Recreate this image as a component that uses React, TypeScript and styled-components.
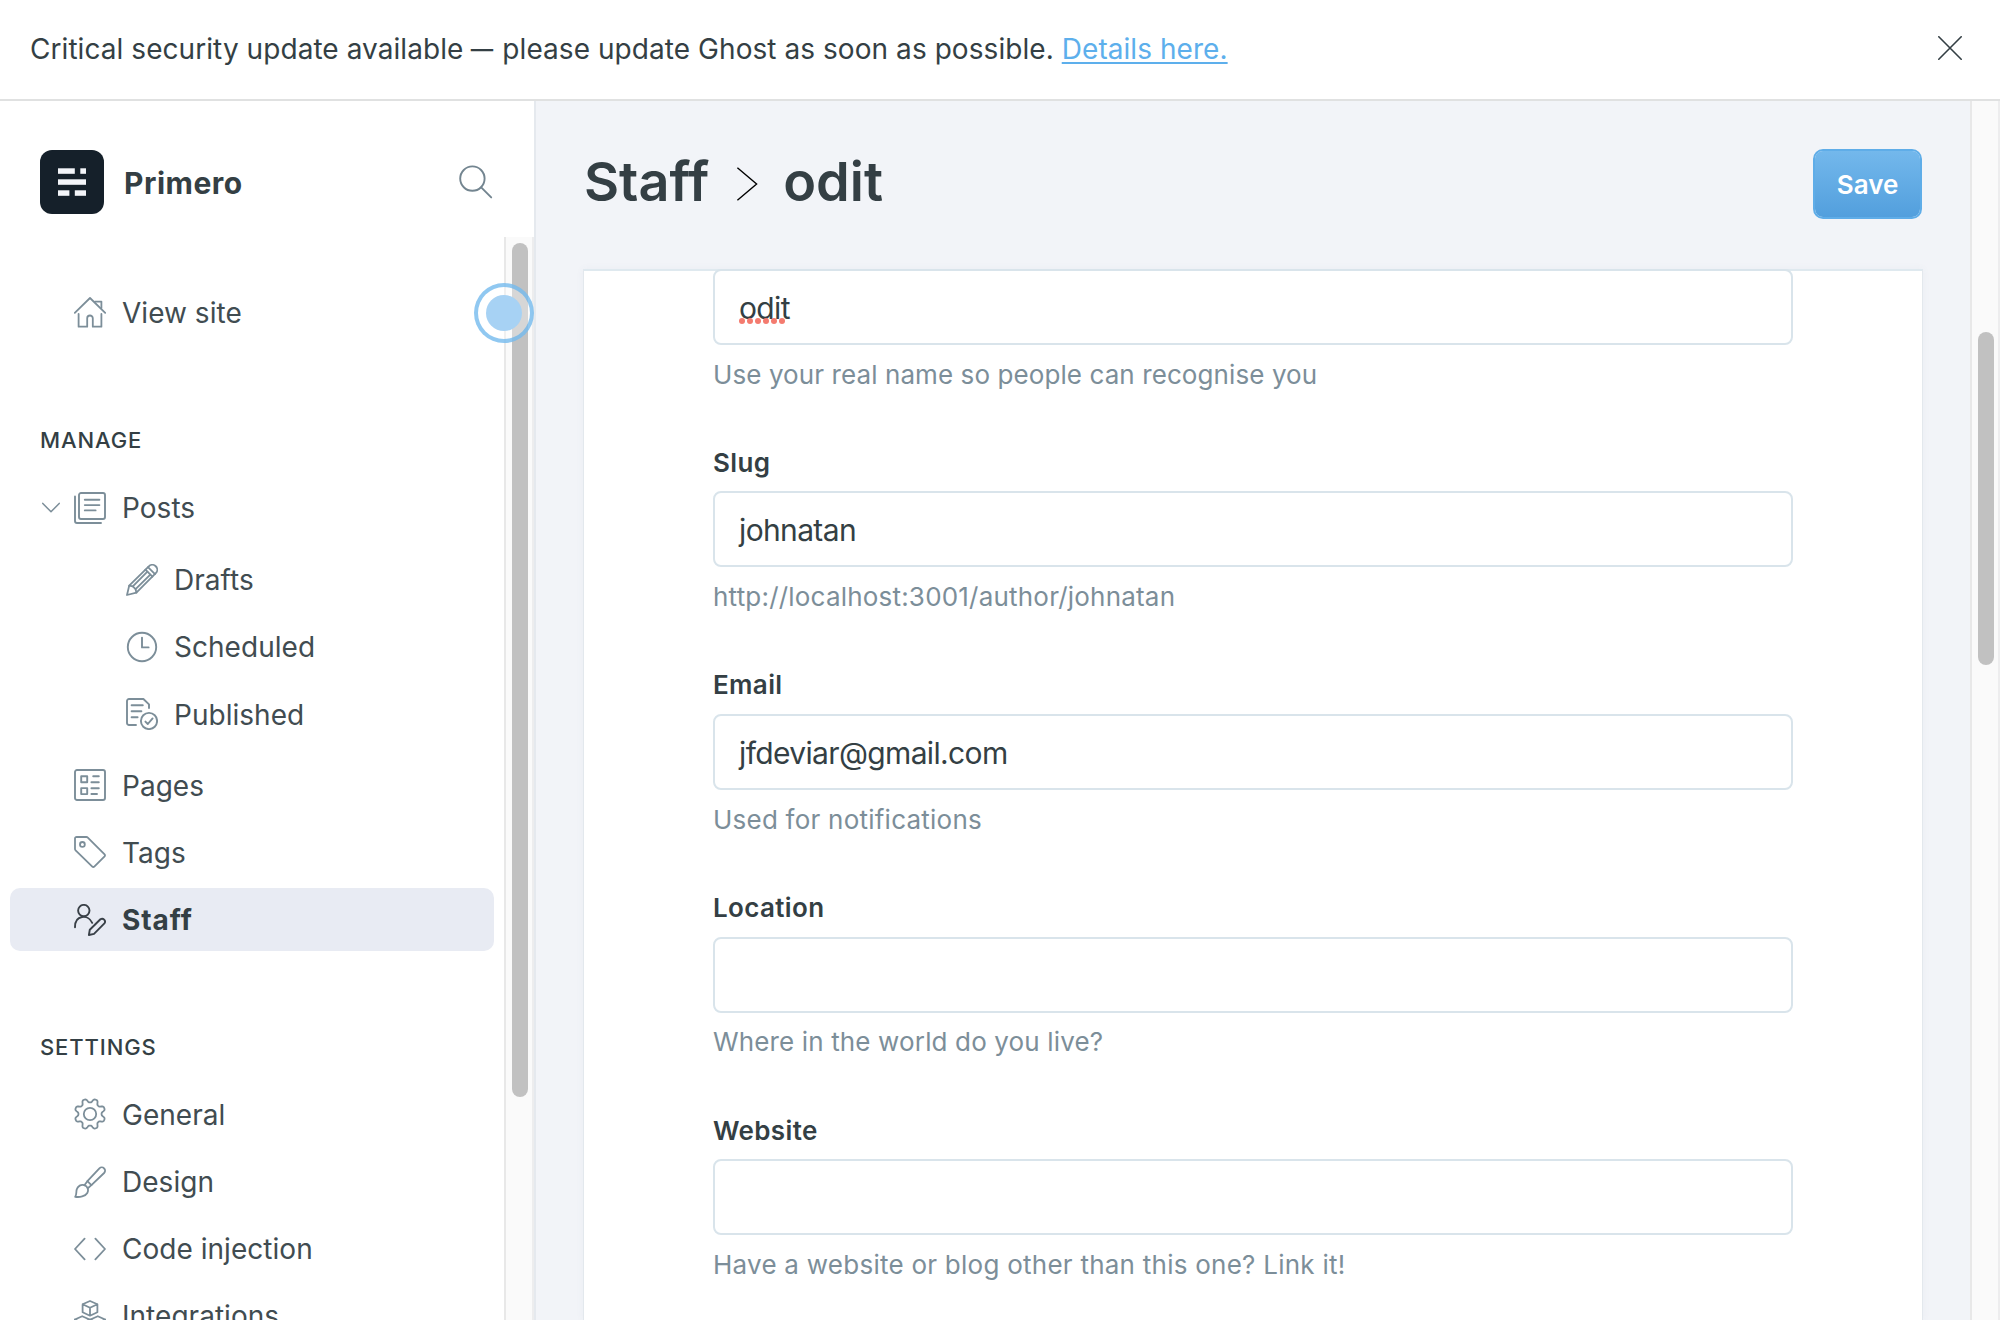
import React from 'react';
import styled, { createGlobalStyle } from 'styled-components';

const GlobalStyle = createGlobalStyle`
  *, *::before, *::after { box-sizing: border-box; }
  html, body { margin: 0; padding: 0; }
  body {
    font-family: Inter, 'Liberation Sans', sans-serif;
    color: #343f44;
    background: #fff;
    overflow: hidden;
  }
`;

const Page = styled.div`
  display: flex;
  flex-direction: column;
  width: 2000px;
  height: 1320px;
  overflow: hidden;
`;

/* ---------- Banner ---------- */

const Banner = styled.header`
  display: flex;
  align-items: center;
  justify-content: space-between;
  flex: none;
  height: 101px;
  padding: 0 38px 0 30px;
  border-bottom: 2px solid #e0e1e1;
`;

const BannerText = styled.p`
  margin: 0;
  padding-bottom: 1px;
  font-size: 28px;
  line-height: 36px;
  letter-spacing: 0.06px;
  white-space: nowrap;
`;

const Dash = styled.span`
  display: inline-block;
  margin: 0 -2px 0 -3px;
  transform: scaleX(0.8);
`;

const BannerLink = styled.a`
  color: #5dafec;
  text-decoration: underline;
  text-decoration-thickness: 2px;
  text-underline-offset: 3px;
`;

const CloseButton = styled.button`
  display: flex;
  padding: 0;
  margin-top: -3px;
  border: 0;
  background: none;
`;

const Body = styled.div`
  display: flex;
  flex: 1;
  min-height: 0;
`;

/* ---------- Sidebar ---------- */

const Sidebar = styled.aside`
  position: relative;
  display: flex;
  flex-direction: column;
  flex: none;
  width: 536px;
  border-right: 2px solid #e5e9ee;
`;

const SiteHeader = styled.div`
  display: flex;
  align-items: center;
  flex: none;
  height: 136px;
  padding: 56px 41px 30px 40px;
`;

const SiteName = styled.span`
  flex: 1;
  margin: 2px 0 0 20px;
  font-size: 30px;
  font-weight: 700;
  letter-spacing: 0.5px;
`;

const SearchButton = styled.button`
  display: flex;
  padding: 0;
  border: 0;
  background: none;
  color: #738590;
`;

const NavArea = styled.div`
  display: flex;
  flex: 1;
  min-height: 0;
`;

const NavList = styled.nav`
  flex: 1;
  min-width: 0;
  padding: 44.4px 10px 0;
  overflow: hidden;
`;

const NavHeading = styled.h2`
  margin: 0;
  padding: 77.8px 0 21.8px 30px;
  font-size: 22px;
  line-height: 28px;
  font-weight: 500;
  letter-spacing: 0.9px;
  text-transform: uppercase;
`;

const NavItem = styled.a<{ $active?: boolean; $sub?: boolean }>`
  display: flex;
  align-items: center;
  height: 63.2px;
  margin-bottom: 4px;
  padding-left: ${(p) => (p.$sub ? 116 : 30)}px;
  border-radius: 10px;
  background: ${(p) => (p.$active ? '#e8ebf3' : 'transparent')};
  color: ${(p) => (p.$active ? '#343f44' : '#414c51')};
  font-size: 28px;
  font-weight: ${(p) => (p.$active ? 700 : 400)};
  letter-spacing: ${(p) => (p.$active ? 0.95 : 0.03)}px;
  white-space: nowrap;

  svg { color: ${(p) => (p.$active ? '#394047' : '#7c8e99')}; }
`;

const NavLabel = styled.span`
  padding: 1px 0 0 16px;
`;

const CaretSlot = styled.span`
  display: flex;
  align-items: center;
  width: 34px;
`;

const SubNav = styled.div`
  padding: 4.7px 0 4px;
`;

const Track = styled.div<{ $top: number }>`
  flex: none;
  width: 30px;
  padding: ${(p) => p.$top}px 4px 0 6px;
  border-left: 2px solid #e8e8e8;
  border-right: 2px solid #ededee;
  background: #fafafa;
`;

const Thumb = styled.div<{ $length: number }>`
  width: 16px;
  height: ${(p) => p.$length}px;
  border-radius: 8px;
  background: #c1c1c1;
`;

const ClickMarker = styled.div`
  position: absolute;
  left: 474px;
  top: 182px;
  display: flex;
  align-items: center;
  justify-content: center;
  width: 60px;
  height: 60px;
  border: 4px solid rgba(97, 176, 235, 0.7);
  border-radius: 50%;
  background: rgba(255, 255, 255, 0.35);

  &::after {
    content: '';
    width: 36px;
    height: 36px;
    border-radius: 50%;
    background: #a7d2f4;
  }
`;

/* ---------- Main ---------- */

const Main = styled.main`
  display: flex;
  flex-direction: column;
  flex: 1;
  min-width: 0;
  padding: 0 47px;
  background: #f2f4f8;
  overflow: hidden;
`;

const Toolbar = styled.div`
  display: flex;
  align-items: flex-start;
  justify-content: space-between;
  flex: none;
  height: 168px;
  padding: 48px 1px 0;
`;

const Title = styled.h1`
  display: flex;
  align-items: center;
  margin: 0;
  font-size: 54px;
  line-height: 66px;
  font-weight: 600;
  letter-spacing: 0;

  svg { margin: 4px 25px 0 27px; }
`;

const SaveButton = styled.button`
  width: 109px;
  height: 70px;
  padding: 0;
  border: 2px solid #5fade8;
  border-radius: 10px;
  background: linear-gradient(#73b8ec, #529fdd) padding-box;
  color: #fff;
  font-family: inherit;
  font-size: 26px;
  font-weight: 600;
`;

const Card = styled.section`
  flex: 1;
  padding: 0 129px;
  border: 1px solid #e3e8ed;
  border-top: 2px solid #dfe9ef;
  border-bottom: 0;
  background: #fff;
  box-shadow: 0 0 8px rgba(70, 100, 130, 0.05);
`;

const Form = styled.form`
  margin-top: -2.3px;
`;

const FieldGroup = styled.div`
  display: flex;
  flex-direction: column;
  justify-content: flex-end;
  height: 222.67px;

  &:first-child { height: 123.8px; }
`;

const FieldLabel = styled.label`
  margin-bottom: 11.7px;
  font-size: 26px;
  line-height: 34px;
  font-weight: 600;
  letter-spacing: 0.35px;
`;

const FieldInput = styled.div`
  display: flex;
  align-items: center;
  flex: none;
  height: 76px;
  padding: 2px 24px 0;
  border: 2px solid #d9e4eb;
  border-radius: 8px;
  background: #fff;
  font-size: 30px;
  letter-spacing: -0.64px;
`;

const Misspelled = styled.span`
  position: relative;

  svg { position: absolute; left: 0; bottom: 1.5px; }
`;

const Hint = styled.p<{ $tracking: number }>`
  margin: 11.8px 0 0;
  font-size: 26px;
  line-height: 36px;
  letter-spacing: ${(p) => p.$tracking}px;
  color: #7c8e99;
  white-space: nowrap;
`;

/* ---------- Icons ---------- */

const IconSvg = styled.svg`
  display: block;
  flex: none;
  fill: none;
  stroke: currentColor;
  stroke-linejoin: round;
  stroke-linecap: round;
`;

const Svg = ({ w = 32, h = 32, sw = 1.9, children }: { w?: number; h?: number; sw?: number; children: React.ReactNode }) => (
  <IconSvg width={w} height={h} viewBox={`0 0 ${w} ${h}`} strokeWidth={sw}>
    {children}
  </IconSvg>
);

const HomeIcon = () => (
  <Svg sw={1.8}>
    <path d="M.8 15.8 L16 1 L31.2 15.8" />
    <path d="M4.6 17 V29.7 H13.2 V21.2 C13.2 17.6 18.8 17.6 18.8 21.2 V29.7 H27.4 V17" />
    <path d="M21 4.6 H27.4 V11" />
  </Svg>
);
const PostsIcon = () => (
  <Svg>
    <path d="M1 4.5 V29 a2 2 0 0 0 2 2 H27" />
    <rect x="5" y="1" width="26" height="26" rx="2" />
    <path d="M10.8 7.7 H25.4 M10.8 13.1 H25.4 M10.8 18.4 H21.6" />
  </Svg>
);
const DraftsIcon = () => (
  <Svg sw={1.8}>
    <path d="M1 31 L3.2 21.6 L22.8 2.3 A4.9 4.9 0 0 1 29.8 9.2 L10.4 28.7 Z" />
    <path d="M19.4 5.7 L26.4 12.7 M22 3.1 L29 10.1" />
    <path d="M6.8 22.4 L21.4 7.7 M9.6 25.2 L24.3 10.6" />
    <path d="M3.2 21.6 L6.8 22.4 L9.6 25.2 L10.4 28.7" />
  </Svg>
);
const ClockIcon = () => (
  <Svg>
    <circle cx="16" cy="16" r="14.2" />
    <path d="M16 6.6 V16.4 H22.6" />
  </Svg>
);
const PublishedIcon = () => (
  <Svg>
    <path d="M10 27 H3 a2 2 0 0 1 -2 -2 V3 a2 2 0 0 1 2 -2 H17.4 L23 6.4 V10" />
    <path d="M5.6 7.2 H16.8 M5.6 13.2 H15.4 M5.6 19.2 H11.6" />
    <circle cx="23" cy="23" r="8.1" />
    <path d="M19.4 23.6 L21.8 26 L26.6 20.4" />
  </Svg>
);
const PagesIcon = () => (
  <Svg>
    <rect x="1" y="1" width="30" height="30" rx="2" />
    <rect x="7.2" y="7.2" width="6" height="6" />
    <rect x="7.2" y="19.1" width="6" height="6" />
    <path d="M19.2 7.2 H24.8 M17.4 13.2 H24.8 M17.4 19.2 H24.8 M17.4 25 H23" />
  </Svg>
);
const TagIcon = () => (
  <Svg sw={1.8}>
    <path d="M1 2.6 A1.6 1.6 0 0 1 2.6 1 H12.4 a2 2 0 0 1 1.4 .6 L30.6 18.3 a1.4 1.4 0 0 1 0 2 L20.3 30.6 a1.4 1.4 0 0 1 -2 0 L1.6 14.4 a2 2 0 0 1 -.6 -1.4 Z" />
    <circle cx="8.4" cy="8.4" r="2.4" />
  </Svg>
);
const StaffIcon = () => (
  <Svg>
    <circle cx="9.8" cy="6.6" r="5.7" />
    <path d="M1 23.2 C1 10.6 14 10.2 18.2 18.8" />
    <path d="M14.9 31 L15.8 25.7 L26.4 15.3 A2.9 2.9 0 0 1 30.4 19.4 L20 29.9 Z" />
  </Svg>
);

/* Eight-tooth gear outline, traced as a clipped cosine around the hub. */
const gearPath = Array.from({ length: 160 }, (_, i) => {
  const a = (i / 160) * Math.PI * 2;
  const r = 13.5 - 2.1 * Math.tanh(1.6 * Math.cos(8 * a));
  return `${i ? 'L' : 'M'}${(16 + r * Math.cos(a)).toFixed(2)} ${(16 + r * Math.sin(a)).toFixed(2)}`;
}).join(' ') + ' Z';

const GearIcon = () => (
  <Svg sw={1.8}>
    <path d={gearPath} />
    <circle cx="16" cy="16" r="6.2" />
  </Svg>
);
const BrushIcon = () => (
  <Svg sw={1.8}>
    <path d="M1.2 30.8 C2.8 28.6 2 26.2 2.7 23.6 C3.6 20 7.2 18 10.4 19.2 C13.8 20.5 14.9 24.2 13.3 27 C11.3 30.5 5.6 31.5 1.2 30.8 Z" />
    <path d="M10.4 19.2 L13.4 15.2 L25.4 2.3 A3.3 3.3 0 0 1 30.1 7 L17.4 19.1 L13.8 22.2" />
    <path d="M13.4 15.2 L17.4 19.1" />
  </Svg>
);
const CodeIcon = () => (
  <Svg sw={1.8}>
    <path d="M10.6 5.6 L1 16 L10.6 26.4 M21.4 5.6 L31 16 L21.4 26.4" />
  </Svg>
);
const cube = 'l7.4 3.3 v8 l-7.4 3.4 l-7.4 -3.4 v-8 Z m-7.4 3.3 l7.4 3.5 l7.4 -3.5 m-7.4 3.5 v7.9';
const CubesIcon = () => (
  <Svg sw={1.8}>
    <path d={`M16 1 ${cube}`} />
    <path d={`M8.2 16.2 ${cube}`} />
    <path d={`M23.8 16.2 ${cube}`} />
  </Svg>
);
const SearchIcon = () => (
  <Svg w={34} h={34}>
    <circle cx="13.4" cy="13.6" r="12.2" />
    <path d="M22.2 22.4 L32.2 32.4" />
  </Svg>
);
const CaretIcon = () => (
  <Svg w={20} h={12} sw={1.5}>
    <path d="M2.8 1.4 L11 9.8 L19.2 1.4" />
  </Svg>
);
const CrossIcon = () => (
  <svg width="24" height="24" viewBox="0 0 24 24" stroke="#343f44" strokeWidth="1.6" strokeLinecap="round">
    <path d="M.8 .8 L23.2 23.2 M23.2 .8 L.8 23.2" />
  </svg>
);
const CrumbIcon = () => (
  <svg width="22" height="34" viewBox="0 0 22 34" fill="none" stroke="#000" strokeWidth="1.4">
    <path d="M1.4 .8 L20.6 17 L1.4 33.2" />
  </svg>
);
const SpellingDots = () => (
  <svg width="48" height="6" viewBox="0 0 48 6" fill="#f47b6f">
    {[3, 11, 19, 27, 35, 43].map((x) => <circle key={x} cx={x} cy="3" r="3" />)}
  </svg>
);
const Logo = () => (
  <svg width="64" height="64" viewBox="0 0 64 64">
    <rect width="64" height="64" rx="12" fill="#15202a" />
    <g fill="#f3f5f9">
      <rect x="18" y="18.3" width="16.8" height="5.5" />
      <rect x="40.3" y="18.3" width="5.7" height="5.5" />
      <rect x="18" y="29.3" width="28" height="5.5" />
      <rect x="18" y="40.3" width="11.4" height="5.5" />
      <rect x="34.8" y="40.3" width="11.2" height="5.5" />
    </g>
  </svg>
);

/* ---------- Data ---------- */

type Entry = { label: string; icon: React.ReactNode; active?: boolean; open?: boolean };

const postFilters: Entry[] = [
  { label: 'Drafts', icon: <DraftsIcon /> },
  { label: 'Scheduled', icon: <ClockIcon /> },
  { label: 'Published', icon: <PublishedIcon /> },
];
const manage: Entry[] = [
  { label: 'Pages', icon: <PagesIcon /> },
  { label: 'Tags', icon: <TagIcon /> },
  { label: 'Staff', icon: <StaffIcon />, active: true },
];
const settings: Entry[] = [
  { label: 'General', icon: <GearIcon /> },
  { label: 'Design', icon: <BrushIcon /> },
  { label: 'Code injection', icon: <CodeIcon /> },
  { label: 'Integrations', icon: <CubesIcon /> },
];

type Field = { label?: string; value: string; hint: string; tracking: number; misspelled?: boolean };

const fields: Field[] = [
  { value: 'odit', hint: 'Use your real name so people can recognise you', tracking: 0.09, misspelled: true },
  { label: 'Slug', value: 'johnatan', hint: 'http://localhost:3001/author/johnatan', tracking: 0.2 },
  { label: 'Email', value: 'jfdeviar@gmail.com', hint: 'Used for notifications', tracking: 0.23 },
  { label: 'Location', value: '', hint: 'Where in the world do you live?', tracking: 0.14 },
  { label: 'Website', value: '', hint: 'Have a website or blog other than this one? Link it!', tracking: 0.25 },
];

const Item = ({ label, icon, active, open }: Entry) => (
  <NavItem $active={active}>
    <CaretSlot>{open && <CaretIcon />}</CaretSlot>
    {icon}
    <NavLabel>{label}</NavLabel>
  </NavItem>
);

export default function App() {
  return (
    <>
      <GlobalStyle />
      <Page>
        <Banner>
          <BannerText>
            Critical security update available <Dash>—</Dash> please update Ghost as soon as possible.{' '}
            <BannerLink>Details here.</BannerLink>
          </BannerText>
          <CloseButton aria-label="Close"><CrossIcon /></CloseButton>
        </Banner>
        <Body>
          <Sidebar>
            <SiteHeader>
              <Logo />
              <SiteName>Primero</SiteName>
              <SearchButton aria-label="Search"><SearchIcon /></SearchButton>
            </SiteHeader>
            <NavArea>
              <NavList>
                <Item label="View site" icon={<HomeIcon />} />
                <NavHeading>Manage</NavHeading>
                <Item label="Posts" icon={<PostsIcon />} open />
                <SubNav>
                  {postFilters.map((d) => (
                    <NavItem key={d.label} $sub>
                      {d.icon}
                      <NavLabel>{d.label}</NavLabel>
                    </NavItem>
                  ))}
                </SubNav>
                {manage.map((m) => <Item key={m.label} {...m} />)}
                <NavHeading>Settings</NavHeading>
                {settings.map((s) => <Item key={s.label} {...s} />)}
              </NavList>
              <Track $top={6}><Thumb $length={854} /></Track>
            </NavArea>
            <ClickMarker />
          </Sidebar>
          <Main>
            <Toolbar>
              <Title>Staff<CrumbIcon />odit</Title>
              <SaveButton>Save</SaveButton>
            </Toolbar>
            <Card>
              <Form>
                {fields.map((f) => (
                  <FieldGroup key={f.hint}>
                    {f.label && <FieldLabel>{f.label}</FieldLabel>}
                    <FieldInput>
                      {f.misspelled ? <Misspelled>{f.value}<SpellingDots /></Misspelled> : f.value}
                    </FieldInput>
                    <Hint $tracking={f.tracking}>{f.hint}</Hint>
                  </FieldGroup>
                ))}
              </Form>
            </Card>
          </Main>
          <Track $top={231}><Thumb $length={333} /></Track>
        </Body>
      </Page>
    </>
  );
}
